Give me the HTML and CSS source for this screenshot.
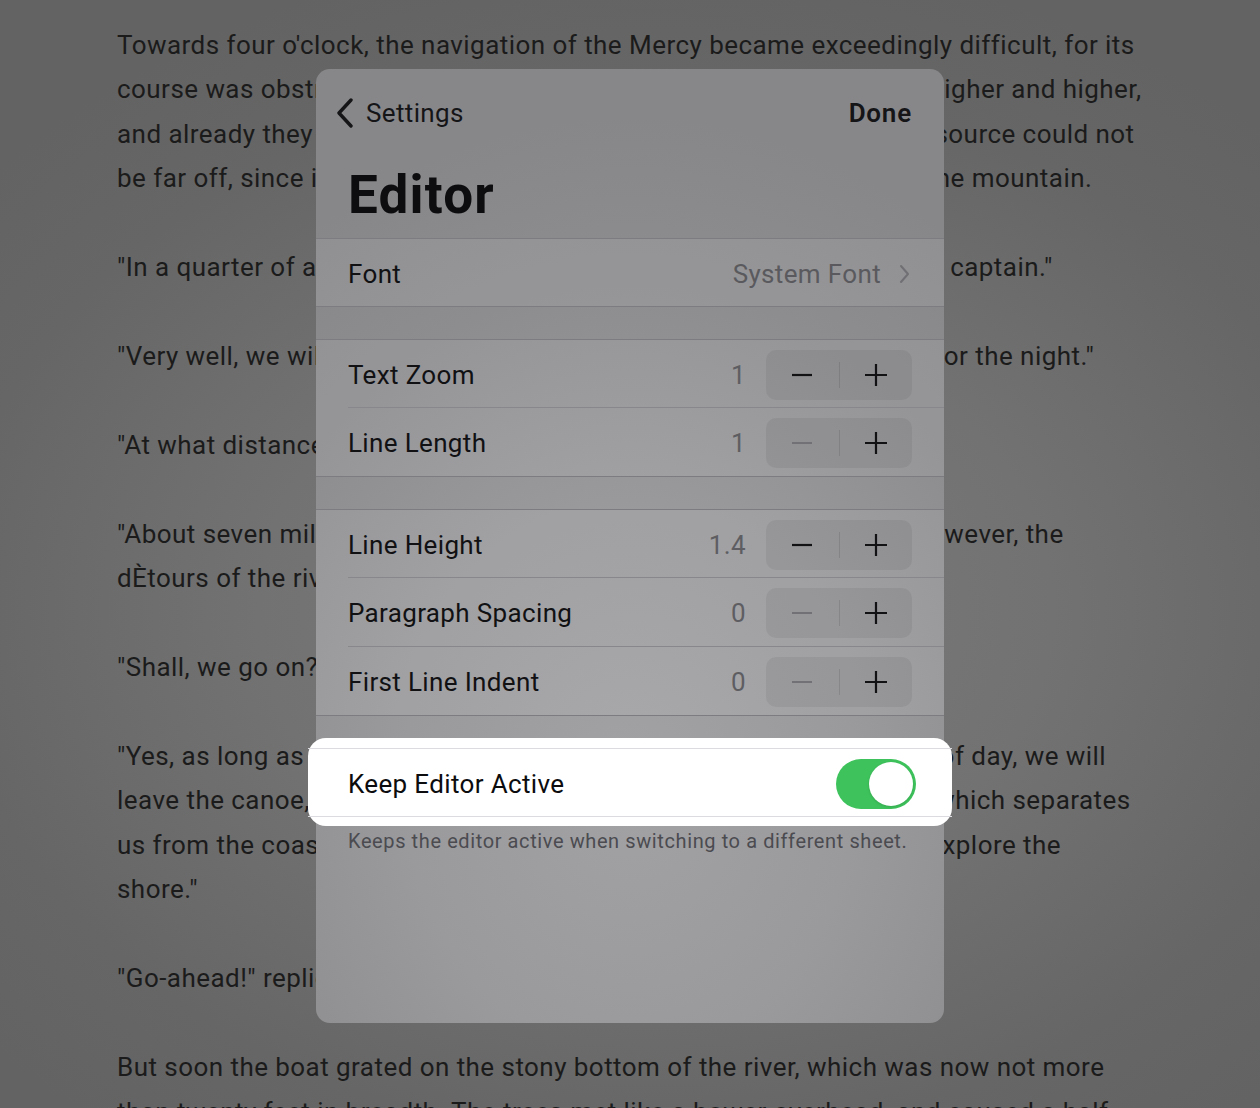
FILE: index.html
```html
<!DOCTYPE html>
<html lang="en">
<head>
<meta charset="utf-8">
<title>Editor Settings</title>
<link rel="stylesheet" href="styles.css">
</head>
<body>
<main class="page">
  <p>Towards four o'clock, the navigation of the Mercy became exceedingly difficult, for its<br>course was obstructed by aquatic plants and rocks. The banks rose higher and higher,<br>and already they were approaching the spurs of Mount Franklin. The source could not<br>be far off, since it was fed by the water from the southern slopes of the mountain.</p>
  <p>"In a quarter of an hour we shall not be able to go on any farther, dear captain."</p>
  <p>"Very well, we will stop, and we shall all make our camp in the forest for the night."</p>
  <p>"At what distance are we now from the coast?"</p>
  <p>"About seven miles in a straight line, if we are to take into account, however, the<br>dÈtours of the river, which has carried us to the north-west."</p>
  <p>"Shall, we go on?" asked the reporter.</p>
  <p>"Yes, as long as we can," replied Cyrus Harding. "To-morrow, at break of day, we will<br>leave the canoe, and in two hours I hope we shall cross the distance which separates<br>us from the coast, and then we shall have the whole day in which to explore the<br>shore."</p>
  <p>"Go-ahead!" replied Pencroft.</p>
  <p>But soon the boat grated on the stony bottom of the river, which was now not more<br>than twenty feet in breadth. The trees met like a bower overhead, and caused a half</p>
</main>

<section class="sheet">
  <header class="nav">
    <button class="back">
      <svg class="chev" width="18" height="30" viewBox="0 0 18 30"><path d="M15 2 L3 15 L15 28" fill="none" stroke="#151517" stroke-width="3.4" stroke-linecap="round" stroke-linejoin="round"/></svg>
      <span>Settings</span>
    </button>
    <button class="done">Done</button>
  </header>
  <h1 class="title">Editor</h1>

  <div class="group">
    <div class="row">
      <span class="label">Font</span>
      <span class="detail">System Font</span>
      <svg class="disc" width="11" height="20" viewBox="0 0 11 20"><path d="M2 2 L9 10 L2 18" fill="none" stroke="#707074" stroke-width="2" stroke-linecap="round" stroke-linejoin="round"/></svg>
    </div>
  </div>

  <div class="group">
    <div class="row">
      <span class="label">Text Zoom</span>
      <span class="value">1</span>
      <div class="stepper">
        <span class="step"><svg width="22" height="22" viewBox="0 0 22 22"><path d="M1 11 H21" stroke="#121214" stroke-width="2.2"/></svg></span>
        <span class="sep"></span>
        <span class="step"><svg width="24" height="24" viewBox="0 0 24 24"><path d="M1 12 H23 M12 1 V23" stroke="#121214" stroke-width="2.2"/></svg></span>
      </div>
    </div>
    <div class="row">
      <span class="label">Line Length</span>
      <span class="value">1</span>
      <div class="stepper">
        <span class="step"><svg width="22" height="22" viewBox="0 0 22 22"><path d="M1 11 H21" stroke="#727276" stroke-width="2"/></svg></span>
        <span class="sep"></span>
        <span class="step"><svg width="24" height="24" viewBox="0 0 24 24"><path d="M1 12 H23 M12 1 V23" stroke="#121214" stroke-width="2.2"/></svg></span>
      </div>
    </div>
  </div>

  <div class="group">
    <div class="row">
      <span class="label">Line Height</span>
      <span class="value">1.4</span>
      <div class="stepper">
        <span class="step"><svg width="22" height="22" viewBox="0 0 22 22"><path d="M1 11 H21" stroke="#121214" stroke-width="2.2"/></svg></span>
        <span class="sep"></span>
        <span class="step"><svg width="24" height="24" viewBox="0 0 24 24"><path d="M1 12 H23 M12 1 V23" stroke="#121214" stroke-width="2.2"/></svg></span>
      </div>
    </div>
    <div class="row">
      <span class="label">Paragraph Spacing</span>
      <span class="value">0</span>
      <div class="stepper">
        <span class="step"><svg width="22" height="22" viewBox="0 0 22 22"><path d="M1 11 H21" stroke="#727276" stroke-width="2"/></svg></span>
        <span class="sep"></span>
        <span class="step"><svg width="24" height="24" viewBox="0 0 24 24"><path d="M1 12 H23 M12 1 V23" stroke="#121214" stroke-width="2.2"/></svg></span>
      </div>
    </div>
    <div class="row">
      <span class="label">First Line Indent</span>
      <span class="value">0</span>
      <div class="stepper">
        <span class="step"><svg width="22" height="22" viewBox="0 0 22 22"><path d="M1 11 H21" stroke="#727276" stroke-width="2"/></svg></span>
        <span class="sep"></span>
        <span class="step"><svg width="24" height="24" viewBox="0 0 24 24"><path d="M1 12 H23 M12 1 V23" stroke="#121214" stroke-width="2.2"/></svg></span>
      </div>
    </div>
  </div>

  <div class="highlight">
    <div class="row row-light">
      <span class="label">Keep Editor Active</span>
      <span class="toggle"><span class="knob"></span></span>
    </div>
  </div>
  <p class="footnote">Keeps the editor active when switching to a different sheet.</p>
</section>
</body>
</html>
```

FILE: styles.css
```css
html, body {
  margin: 0;
  padding: 0;
}
body {
  position: relative;
  width: 1260px;
  height: 1108px;
  overflow: hidden;
  font-family: Roboto, "Noto Sans", "Liberation Sans", sans-serif;
  background: radial-gradient(ellipse 70% 60% at 52% 55%, #7b7b7b 0%, #727272 45%, #666666 80%, #636363 100%);
  color: #1b1b1b;
}
.page {
  padding: 23px 0 0 117px;
  font-size: 26px;
  letter-spacing: 0.45px;
  line-height: 44.4px;
  white-space: nowrap;
}
.page p {
  margin: 0 0 44.5px 0;
}

.sheet {
  position: absolute;
  left: 316px;
  top: 69px;
  width: 628px;
  height: 954px;
  border-radius: 14px;
  background: radial-gradient(ellipse 90% 70% at 50% 75%, #a2a2a5 0%, #9a9a9d 40%, #8d8d90 75%, #87878a 100%);
  color: #111113;
  font-size: 26px;
  letter-spacing: 0.35px;
}
.nav {
  height: 88px;
  display: flex;
  align-items: center;
  justify-content: space-between;
  padding: 0 32px 0 20px;
}
.nav button {
  background: none;
  border: 0;
  padding: 0;
  font: inherit;
  letter-spacing: inherit;
  color: #151517;
}
.back {
  display: flex;
  align-items: center;
  gap: 12px;
}
.nav .done {
  font-weight: 600;
  letter-spacing: 0.8px;
}
.title {
  margin: 0;
  padding: 12px 32px 17px;
  font-size: 53px;
  line-height: 52px;
  font-weight: 700;
  letter-spacing: 1.2px;
  color: #0d0d0f;
}
.group {
  border-top: 1px solid #7d7d81;
  border-bottom: 1px solid #7d7d81;
  background: rgba(255, 255, 255, 0.08);
  margin-bottom: 32px;
}
.row {
  height: 65px;
  padding: 2px 32px 0;
  display: flex;
  align-items: center;
  position: relative;
}
.row + .row {
  height: 67px;
}
.row + .row::before {
  content: "";
  position: absolute;
  left: 32px;
  right: 0;
  top: 0;
  height: 1px;
  background: #88888c;
}
.label {
  flex: 1;
}
.detail {
  color: #5a5a5e;
  margin-right: 18px;
}
.disc {
  margin-right: 2px;
}
.value {
  color: #5e5e62;
  margin-right: 20px;
}
.stepper {
  width: 146px;
  height: 50px;
  border-radius: 10px;
  background: rgba(0, 0, 0, 0.06);
  display: flex;
  align-items: center;
}
.step {
  flex: 1;
  display: flex;
  align-items: center;
  justify-content: center;
}
.sep {
  width: 1px;
  height: 26px;
  background: rgba(0, 0, 0, 0.1);
}
.highlight {
  margin: -10px -8px 0;
  padding: 10px 8px 9px;
  background: #ffffff;
  border-radius: 18px;
}
.row-light {
  height: 65px;
  border-top: 1px solid #dcdce0;
  border-bottom: 1px solid #dcdce0;
  margin: 0 -8px;
  padding: 2px 40px 0;
  color: #0c0c0e;
}
.toggle {
  width: 80px;
  height: 50px;
  border-radius: 25px;
  background: #3ec35c;
  position: relative;
  margin-right: -4px;
}
.knob {
  position: absolute;
  right: 3px;
  top: 3px;
  width: 44px;
  height: 44px;
  border-radius: 50%;
  background: #ffffff;
  box-shadow: 0 1px 3px rgba(0, 0, 0, 0.15);
}
.footnote {
  margin: 4px 32px 0;
  font-size: 20px;
  line-height: 22px;
  letter-spacing: 0.6px;
  color: #4b4b50;
  white-space: nowrap;
}
```
